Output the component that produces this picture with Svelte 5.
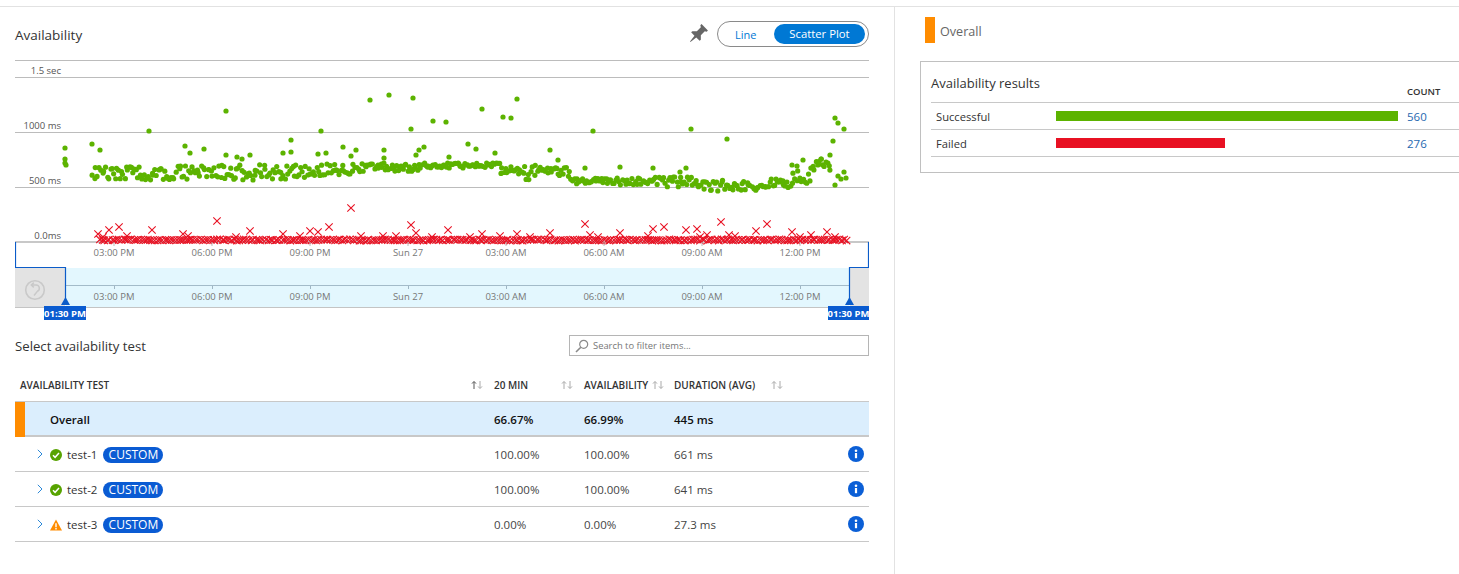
<script>
  function rng(seed) {
    let a = seed;
    return () => {
      a |= 0; a = (a + 0x6d2b79f5) | 0;
      let t = Math.imul(a ^ (a >>> 15), 1 | a);
      t = (t + Math.imul(t ^ (t >>> 7), 61 | t)) ^ t;
      return ((t ^ (t >>> 14)) >>> 0) / 4294967296;
    };
  }
  const bands = [
    [92, 166, 179], [130, 165, 180], [210, 164, 181], [260, 164, 179], [350, 163, 172],
    [420, 163, 168], [500, 166, 174], [520, 165, 184], [540, 167, 177], [570, 178, 184],
    [600, 178, 185], [650, 177, 187], [700, 180, 191], [760, 179, 188], [790, 170, 184],
    [810, 159, 172], [830, 155, 165], [849, 155, 165]
  ];
  const r = rng(1234);
  const band = (x) => {
    let b = bands[0];
    for (const c of bands) if (x >= c[0]) b = c;
    return b;
  };
  const base = [];
  for (let x = 92; x < 830; x += 1.6) {
    const b = band(x);
    base.push([x + r() * 1.5, b[1] + (b[2] - b[1]) * r()]);
  }
  const outliers = [
    [65,148],[65,159],[65,163],[66,165],[92,144],[100,150],[149,131],[226,111],[185,146],[190,153],[204,149],
    [291,140],[283,153],[291,152],[321,131],[318,154],[326,153],[343,147],[351,156],[356,150],[370,100],
    [389,95],[413,98],[411,129],[433,121],[446,122],[384,150],[384,158],[424,147],[419,150],[416,155],
    [449,157],[237,157],[242,159],[250,155],[226,155],[482,109],[503,117],[511,118],[517,99],[468,144],
    [476,149],[495,153],[550,150],[558,160],[593,131],[691,129],[727,139],[835,118],[838,123],[844,129],
    [833,141],[830,155],[821,159],[803,160],[792,165],[797,166],[835,185],[846,178],[844,172],[838,176],
    [841,179],[620,167],[585,168],[653,168],[686,168],[680,172]
  ];
  const green = [...base, ...outliers];

  const r2 = rng(77);
  const redBase = [];
  for (let x = 100; x < 848; x += 2.4) redBase.push([x + (r2() - 0.5) * 1.5, 239.4 + r2() * 1.2]);
  const red = [
    ...redBase,
    [98,234],[109,230],[119,227],[127,236],[152,230],[183,234],[217,221],[250,231],[283,234],[310,231],
    [318,232],[329,227],[351,208],[411,225],[416,233],[448,230],[482,234],[517,234],[550,233],[585,224],
    [590,235],[620,233],[653,229],[664,227],[686,230],[697,229],[721,222],[707,235],[729,235],[756,231],
    [767,224],[792,232],[811,235],[827,232],
    [103,237],[188,236],[236,237],[300,236],[361,236],[383,236],[396,236],[432,237],[470,237],[500,236],
    [530,237],[598,237],[648,236],[700,237],[735,236],[800,237],[835,237]
  ];
  const ticks = [
    [114,'03:00 PM'],[212,'06:00 PM'],[310,'09:00 PM'],[408,'Sun 27'],
    [506,'03:00 AM'],[604,'06:00 AM'],[702,'09:00 AM'],[800,'12:00 PM']
  ];
  const gridY = [
    [60,null],[77,'1.5 sec'],[132,'1000 ms'],[187,'500 ms']
  ];
  const rows = [
    { name: 'test-1', status: 'ok', d20: '100.00%', avail: '100.00%', dur: '661 ms' },
    { name: 'test-2', status: 'ok', d20: '100.00%', avail: '100.00%', dur: '641 ms' },
    { name: 'test-3', status: 'warn', d20: '0.00%', avail: '0.00%', dur: '27.3 ms' }
  ];
</script>

{#snippet sort(active)}
  <svg class="sort" width="12" height="10" viewBox="0 0 12 10">
    <path d="M3 9V2M1 3.6 3 1.4l2 2.2" fill="none" stroke={active ? '#555' : '#aaa'} stroke-width="1"/>
    <path d="M9 1v7M7 6.4 9 8.6l2-2.2" fill="none" stroke="#aaa" stroke-width="1"/>
  </svg>
{/snippet}

<div class="page">
  <section class="left">
    <header class="head">
      <h2 class="title">Availability</h2>
      <svg class="pin" width="20" height="20" viewBox="0 0 20 20">
        <path transform="rotate(45 10 10)" fill="#666" d="M5.5 0.5h9v1.7l-1.7 1v5.6l3.2 3.2v1.7h-4.7L10.3 21h-.6L8.7 13.7H4v-1.7l3.2-3.2V3.2l-1.7-1z"/>
      </svg>
      <div class="toggle">
        <span class="opt">Line</span>
        <span class="opt on">Scatter Plot</span>
      </div>
    </header>

    <svg class="chart" width="854" height="262" viewBox="15 60 854 262">
      <rect x="66" y="268" width="783" height="39" fill="#e3f7fe"/>
      <rect x="15" y="268" width="50" height="39" fill="#e3e3e3"/>
      <rect x="850" y="268" width="19" height="39" fill="#e3e3e3"/>
      {#each gridY as g}
        <line x1="15" x2="869" y1={g[0] + 0.5} y2={g[0] + 0.5} stroke="#bcbcbc"/>
        {#if g[1]}<text x="61" y={g[0] - 3.5} text-anchor="end" class="axis">{g[1]}</text>{/if}
      {/each}
      <text x="61" y="239" text-anchor="end" class="axis">0.0ms</text>
      <line x1="15" x2="869" y1="242" y2="242" stroke="#c8c8c8" stroke-width="2"/>

      {#each green as p}<circle cx={p[0]} cy={p[1]} r="2.6" fill="#5cb300"/>{/each}
      {#each red as p}
        <path d="M{p[0]-3.7} {p[1]-3.7}l7.4 7.4M{p[0]-3.7} {p[1]+3.7}l7.4 -7.4" stroke="#e81123" stroke-width="1.1" fill="none"/>
      {/each}

      {#each ticks as t}
        <line x1={t[0]} x2={t[0]} y1="242" y2="246" stroke="#bbb"/>
        <text x={t[0]} y="255.5" text-anchor="middle" class="tick">{t[1]}</text>
        <line x1={t[0] + 0.5} x2={t[0] + 0.5} y1="285" y2="289" stroke="#9fb6c4"/>
        <text x={t[0]} y="299.5" text-anchor="middle" class="tick">{t[1]}</text>
      {/each}
      <line x1="66" x2="849" y1="285.5" y2="285.5" stroke="#a3bbc9"/>
      <line x1="15" x2="869" y1="307.5" y2="307.5" stroke="#c4c4c4"/>

      <path d="M15.5 242V267.5H65.5V304" fill="none" stroke="#0b5cc9" stroke-width="1.2"/>
      <path d="M868.5 242V267.5H849.5V304" fill="none" stroke="#0b5cc9" stroke-width="1.2"/>
      <path d="M61 305l4.5-8 4.5 8z" fill="#0b5cc9"/>
      <path d="M845 305l4.5-8 4.5 8z" fill="#0b5cc9"/>
      <rect x="44" y="306" width="42" height="14" fill="#0a5bd0"/>
      <rect x="828" y="306" width="41" height="14" fill="#0a5bd0"/>
      <text x="65" y="317" text-anchor="middle" class="stamp">01:30 PM</text>
      <text x="848.5" y="317" text-anchor="middle" class="stamp">01:30 PM</text>

      <circle cx="35" cy="290" r="9.3" fill="none" stroke="#c9c9c9" stroke-width="1.6"/>
      <path d="M31.5 285h4.7a3.3 3.3 0 0 1 1.2 6.3L34 295.5M33.8 282.6 31.3 285l2.5 2.4" fill="none" stroke="#c9c9c9" stroke-width="1.5"/>
    </svg>

    <div class="selectRow">
      <h2 class="sub">Select availability test</h2>
      <label class="search">
        <svg width="14" height="14" viewBox="0 0 14 14">
          <circle cx="8.7" cy="5.3" r="4" fill="none" stroke="#8a8a8a" stroke-width="1.2"/>
          <path d="M5.8 8.2 1 13" stroke="#8a8a8a" stroke-width="1.6"/>
        </svg>
        <span>Search to filter items...</span>
      </label>
    </div>

    <div class="table">
      <div class="row th">
        <div class="c1"><span>AVAILABILITY TEST</span>{@render sort(true)}</div>
        <div class="c2"><span>20 MIN</span>{@render sort(false)}</div>
        <div class="c3"><span>AVAILABILITY</span>{@render sort(false)}</div>
        <div class="c4"><span>DURATION (AVG)</span>{@render sort(false)}</div>
      </div>
      <div class="row overall">
        <div class="c1"><i class="swatch"></i><span>Overall</span></div>
        <div>66.67%</div>
        <div>66.99%</div>
        <div>445 ms</div>
      </div>
      {#each rows as row}
        <div class="row item">
          <div class="c1">
            <svg class="chev" width="6" height="10" viewBox="0 0 6 10"><path d="M.8.8 5 5 .8 9.2" fill="none" stroke="#2b88d8" stroke-width="1"/></svg>
            {#if row.status === 'ok'}
              <svg class="st" width="12" height="12" viewBox="0 0 12 12">
                <circle cx="6" cy="6" r="6" fill="#57a300"/>
                <path d="M3 6.2 5.1 8.3 9 4.1" fill="none" stroke="#fff" stroke-width="1.5"/>
              </svg>
            {:else}
              <svg class="st" width="12" height="12" viewBox="0 0 12 12">
                <path d="M6 .4 12 11.6H0z" fill="#ff8c00"/>
                <path d="M6 4.2v4M6 9v1.5" stroke="#fff" stroke-width="1.4"/>
              </svg>
            {/if}
            <span class="name">{row.name}</span>
            <span class="badge">CUSTOM</span>
          </div>
          <div>{row.d20}</div>
          <div>{row.avail}</div>
          <div>{row.dur}</div>
          <svg class="info" width="16" height="16" viewBox="0 0 16 16">
            <circle cx="8" cy="8" r="8" fill="#0b5fd6"/>
            <rect x="6.9" y="7" width="2.2" height="5.2" fill="#fff"/>
            <circle cx="8" cy="4.8" r="1.3" fill="#fff"/>
          </svg>
        </div>
      {/each}
    </div>
  </section>

  <aside class="right">
    <div class="legend"><i class="legendBar"></i><span>Overall</span></div>
    <div class="card">
      <div class="cardHead">
        <h3>Availability results</h3>
        <span class="count">COUNT</span>
      </div>
      <div class="res">
        <span class="lbl">Successful</span>
        <span class="track"><i class="bar good" style="width:342px"></i></span>
        <span class="val">560</span>
      </div>
      <div class="res">
        <span class="lbl">Failed</span>
        <span class="track"><i class="bar bad" style="width:169px"></i></span>
        <span class="val">276</span>
      </div>
    </div>
  </aside>
</div>

<style>
  :global(body) { margin: 0; background: #fff; overflow: hidden; }
  .page {
    display: flex;
    width: 1459px;
    height: 568px;
    margin-top: 6px;
    border-top: 1px solid #e2e2e2;
    font-family: "Open Sans", "Noto Sans", sans-serif;
    font-size: 11.5px;
    color: #333;
    box-sizing: border-box;
  }
  .left {
    width: 854px;
    padding: 0 25px 0 15px;
    border-right: 1px solid #e2e2e2;
    flex: none;
  }
  .head { display: flex; align-items: center; height: 26px; margin: 14px 0 13px; }
  .title { font-size: 13.5px; font-weight: 400; margin: 2px auto 0 0; color: #333; }
  .pin { margin-right: 9px; }
  .toggle {
    display: flex; align-items: center; justify-content: space-between;
    width: 152px; height: 26px; box-sizing: border-box;
    border: 1px solid #8a8a8a; border-radius: 13px; padding: 0 3px 0 17px;
  }
  .opt { color: #0078d4; font-size: 11px; }
  .opt.on {
    background: #0078d4; color: #fff; width: 91px; height: 20px; line-height: 20px;
    text-align: center; border-radius: 10px; font-size: 11.3px;
  }
  .chart { display: block; }
  .axis { font-size: 9.5px; fill: #555; }
  .tick { font-size: 9.5px; fill: #777; }
  .stamp { font-size: 9.5px; fill: #fff; font-weight: 700; }
  .selectRow { display: flex; align-items: center; justify-content: space-between; height: 21px; margin-top: 13px; }
  .sub { font-size: 13.2px; font-weight: 400; margin: 1px 0 0; color: #333; }
  .search {
    display: flex; align-items: center; gap: 4px; box-sizing: border-box;
    width: 300px; height: 21px; border: 1px solid #b5b5b5; padding-left: 5px;
    font-size: 9.4px; color: #777;
  }
  .table { margin-top: 17px; }
  .row { display: grid; grid-template-columns: 479px 90px 90px 1fr; align-items: center; box-sizing: border-box; position: relative; }
  .c1, .c2, .c3, .c4 { display: flex; align-items: center; }
  .th { height: 28px; padding-bottom: 5px; font-size: 10px; font-weight: 600; color: #333; }
  .th .c1 { justify-content: space-between; padding: 0 11px 0 5px; }
  .th .c2 { justify-content: space-between; padding-right: 11px; }
  .th .c3 { justify-content: space-between; padding-right: 10px; }
  .th .c4 { gap: 16px; }
  .overall {
    height: 36px; background: #dbeefd; border-top: 1px solid #c8c8c8; border-bottom: 2px solid #c8c8c8;
    font-weight: 600; color: #111; line-height: 35px;
  }
  .overall .c1 { height: 100%; }
  .swatch { display: block; width: 10px; height: 100%; background: #ff8c00; margin-right: 25px; }
  .item { height: 35px; border-bottom: 1px solid #c8c8c8; color: #444; }
  .item .c1 { padding: 2px 0 0 22px; }
  .chev { margin-right: 7px; margin-top: -2px; }
  .st { margin-right: 5px; }
  .name { margin-right: 6px; color: #333; margin-top: -2px; }
  .badge {
    display: block; width: 60px; height: 16px; line-height: 16px; text-align: center;
    background: #0a5bd3; color: #fff; border-radius: 8px; font-size: 12px;
  }
  .info { position: absolute; right: 5px; top: 9px; }
  .right { flex: 1; min-width: 0; overflow: hidden; padding-left: 25px; }
  .legend { display: flex; align-items: center; gap: 5px; margin: 10px 0 18px 5px; height: 26px; color: #666; font-size: 12.6px; }
  .legend span { margin-top: 2px; }
  .legendBar { display: block; width: 10px; height: 26px; background: #ff8c00; }
  .card {
    width: 560px; height: 112px; box-sizing: border-box; border: 1px solid #c0c0c0;
    padding: 10px 0 0 10px;
  }
  .cardHead { display: flex; justify-content: space-between; height: 30px; border-bottom: 1px solid #c8c8c8; }
  .cardHead h3 { font-size: 13px; font-weight: 400; margin: 2px 0 0; color: #333; }
  .count { font-size: 9.5px; font-weight: 600; color: #333; margin: 13px 0 0; width: 72px; }
  .res { display: flex; align-items: center; height: 27px; box-sizing: border-box; border-bottom: 1px solid #c8c8c8; }
  .lbl { width: 125px; padding-left: 5px; box-sizing: border-box; flex: none; color: #333; font-size: 11.2px; }
  .track { width: 351px; flex: none; }
  .bar { display: block; height: 10px; }
  .good { background: #5cb300; }
  .bad { background: #e81123; }
  .val { color: #1f68b0; }
</style>
